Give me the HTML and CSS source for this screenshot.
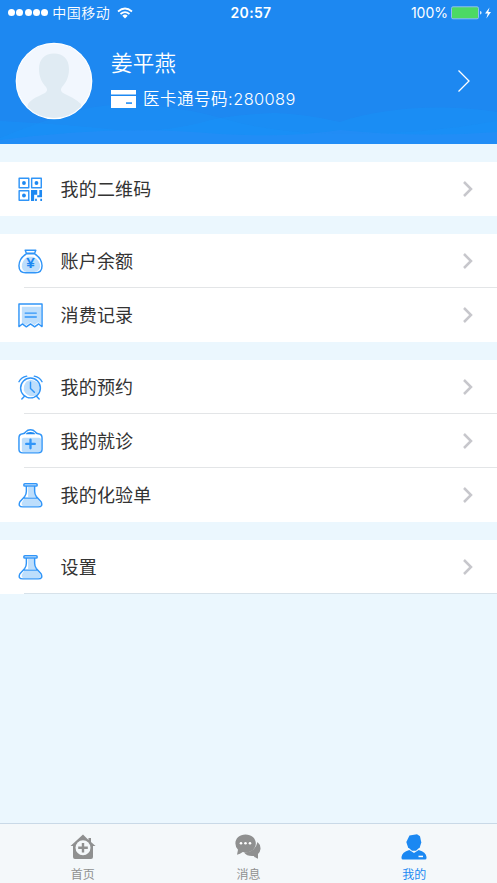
FILE: index.html
```html
<!DOCTYPE html>
<html lang="zh-CN">
<head>
<meta charset="utf-8">
<title>我的</title>
<link rel="stylesheet" href="styles.css">
</head>
<body>
<svg class="defs" aria-hidden="true">
  <symbol id="chevron" viewBox="0 0 12 18"><path d="M2 2l7 7-7 7" fill="none" stroke="#c7c7cc" stroke-width="2.5"/></symbol>
  <symbol id="flask" viewBox="0 0 26 26">
    <path class="tint" d="M10.500 4H17v6q0 2.500 2 4.500h-8.500zM6.500 16h13.500l3.500 4.500q1 3.300-2 3.500H7q-4 0-3-3.500z"/>
    <path class="line" d="M8.700 3.200v5.300Q8.700 11.500 7 14L2 19.500Q-.4 24.800 5 24.800h16q5.400 0 3-5.300L19 14q-1.700-2.500-1.700-5.500V3.200M5.500 15.700h15"/>
    <rect class="line paper" x="6" y=".8" width="14" height="2.400" rx="1.200"/>
  </symbol>
</svg>
<div class="app">
  <header class="header">
    <svg class="waves" viewBox="0 0 497 44" preserveAspectRatio="none">
      <path d="M0 21Q60 24 118 30Q160 33 200 23Q225 15 275 13Q305 14 340 22Q380 8 440 7.500Q475 8 497 12V44H0z" fill="#1696fb" opacity=".4"/>
      <path d="M0 38Q35 23 80 10Q110 2 150 5Q190 9 225 19Q275 34 350 34T497 21V44H0z" fill="#1696fb" opacity=".25"/>
      <path d="M0 40Q120 24 220 34Q290 38 340 30Q420 38 497 32V44H0z" fill="#288df6" opacity=".55"/>
    </svg>
    <div class="status">
      <div class="carrier">
        <span class="dots"><i></i><i></i><i></i><i></i><i></i></span>
        <span class="operator">中国移动</span>
        <svg class="wifi" viewBox="0 0 16 12"><path d="M1 4.500Q8-1.500 15 4.500M3.500 7Q8 3.200 12.500 7" fill="none" stroke="#fff" stroke-width="1.700"/><path d="M5.300 8.700Q8 6.500 10.700 8.700L8 11.500z" fill="#fff"/></svg>
      </div>
      <div class="time">20:57</div>
      <div class="power">
        <span>100%</span>
        <svg class="battery" viewBox="0 0 41 14"><rect x=".5" y=".8" width="27" height="12" rx="1.500" fill="#4cd964" stroke="#8dbcf5"/><path d="M29.200 5q1.300.3 1.300 1.800t-1.300 1.800z" fill="#fff"/><path d="M38.500 1.500L34 7.500h2.800L35.300 12.500 40 6h-2.700z" fill="#fff"/></svg>
      </div>
    </div>
    <div class="profile">
      <svg class="avatar" viewBox="0 0 78 78">
        <defs><clipPath id="face"><circle cx="39" cy="39" r="37"/></clipPath></defs>
        <circle cx="39" cy="39" r="37.700" fill="#f2f7fe" stroke="#fff" stroke-width="1.300"/>
        <path clip-path="url(#face)" d="M39 11.500C30 11.500 24 17 24 27c0 9 3.500 14 7 18 2 3 1 5-2 6.500-6 3-12 5-16 10.500L10 78h60l-4-16c-5-5-11-7.500-17-10.500-3-1.500-4-3.500-2-6.500 3.500-4 7-9 7-18 0-10-6-15.500-15-15.500z" fill="#e0ebf3"/>
      </svg>
      <div class="identity">
        <div class="name">姜平燕</div>
        <div class="card">
          <svg class="card-icon" viewBox="0 0 25 18"><path d="M0 0h25v4.500H0zM0 6h25v12H0z" fill="#fff"/><path d="M15 12.200h6v1.800h-6z" fill="#3a9af5"/></svg>
          <span>医卡通号码:<span class="digits">280089</span></span>
        </div>
      </div>
      <svg class="go" viewBox="0 0 14 24"><path d="M1.500 1.500l10.500 10.500-10.500 10.500" fill="none" stroke="#fff" stroke-width="1.300"/></svg>
    </div>
  </header>

  <main class="menu">
    <section class="group">
      <a class="row">
        <svg class="icon" viewBox="0 0 26 26"><g class="line"><rect x="1.200" y="1.200" width="10" height="10"/><rect x="14.200" y="1.200" width="10" height="10"/><rect x="1.200" y="14.200" width="10" height="10"/></g><g class="solid"><circle cx="6.200" cy="6.200" r="2"/><circle cx="19.200" cy="6.200" r="2"/><circle cx="6.200" cy="19.200" r="2"/><path d="M13.500 13.500H20v5.500h2.200v-5.500h2.800v7.500h-5v-2.500h-3.200V25h-3.300zM17.800 22.700h1.800V25h-1.800zM23.200 22.700H25V25h-1.800z"/></g></svg>
        <span class="label">我的二维码</span><svg class="chevron"><use href="#chevron"/></svg>
      </a>
    </section>
    <section class="group">
      <a class="row">
        <svg class="icon" viewBox="0 0 26 26"><path class="tint" d="M10 8Q4 12 4 18q0 5 5 6h8q6-1 6-6 0-6-7-10z"/><path class="line" d="M8.700 5Q1 10 1 17.500 1 24.800 8 24.800h10q7 0 7-7.300Q25 10 17.300 5M8.700 4.500L7.500 1.300H18.500L17.300 4.500zM8.700 5h8.600"/><text class="yen" x="13" y="20">¥</text></svg>
        <span class="label">账户余额</span><svg class="chevron"><use href="#chevron"/></svg>
      </a>
      <a class="row">
        <svg class="icon" viewBox="0 0 26 26"><path class="tint" d="M4 4h20v18l-3-2-4 3-4-3-4 3-5-2z"/><path class="line" d="M1 1h24v23.500l-3.500-2.700-4.200 3-4.300-3-4.300 3-4.200-3L1 24.500zM7.500 10.500h11.500M7.500 14.500h11.500"/></svg>
        <span class="label">消费记录</span><svg class="chevron"><use href="#chevron"/></svg>
      </a>
    </section>
    <section class="group">
      <a class="row">
        <svg class="icon" viewBox="0 0 26 26"><path class="tint" d="M13 5Q5 7 6 16q3 6 9 6 8-1 8-8-1-8-10-9z"/><circle class="line" cx="13" cy="13.500" r="10.300"/><path class="line" d="M13 7.500v6.500l4 4M1 7Q3.500 2.300 9 1.200M25 7Q22.500 2.300 17 1.200M6.500 22.300L4 25M19.500 22.300L22 25"/></svg>
        <span class="label">我的预约</span><svg class="chevron"><use href="#chevron"/></svg>
      </a>
      <a class="row">
        <svg class="icon" viewBox="0 0 26 26"><rect class="tint" x="4" y="9" width="20" height="15" rx="2"/><path class="line" d="M5 5q2-.1 3-2Q10 .8 13 .8T18 3q1 1.900 3 2 4 .4 4 4v12q0 3.800-4 3.800H5q-4 0-4-3.800V9q0-3.600 4-4z"/><path class="solid" d="M8 5.500Q9 3 13 3t5 2.500z"/><path class="line cross" d="M13 11v9M8.500 15.500h9"/></svg>
        <span class="label">我的就诊</span><svg class="chevron"><use href="#chevron"/></svg>
      </a>
      <a class="row">
        <svg class="icon"><use href="#flask"/></svg>
        <span class="label">我的化验单</span><svg class="chevron"><use href="#chevron"/></svg>
      </a>
    </section>
    <section class="group last">
      <a class="row">
        <svg class="icon"><use href="#flask"/></svg>
        <span class="label">设置</span><svg class="chevron"><use href="#chevron"/></svg>
      </a>
    </section>
  </main>

  <nav class="tabs">
    <a class="tab">
      <svg class="tab-icon" viewBox="0 0 26 26"><path d="M13 .5L.5 12h2.500v11q0 2 2 2h16q2 0 2-2V12h2.500L21 8V4h-2.500v2z" fill="#8f9090"/><circle cx="13" cy="13.800" r="7.500" fill="#f4f8fa"/><path d="M13 9v9.600M8.200 13.800h9.600" stroke="#8f9090" stroke-width="2.400"/></svg>
      <span>首页</span>
    </a>
    <a class="tab">
      <svg class="tab-icon" viewBox="0 0 26 26"><path d="M22.500 8q3.300 2.700 3 7-.3 3-2.500 5v4.800q-2.500-.5-4.300-2.800-6.700.6-9.700-3.500 11 0 13.500-10.500z" fill="#8f9090"/><path d="M10.500.5c6 0 10.300 3.800 10.300 9s-4.300 8.900-10.300 8.900l-2.700-.3Q5 20.500 2 20.700l1-4.900Q.4 13 .4 9.500c0-5.200 4.200-9 10.100-9z" fill="#8f9090"/><g fill="#fff"><circle cx="6" cy="9.200" r="1.300"/><circle cx="10.500" cy="9.200" r="1.300"/><circle cx="15" cy="9.200" r="1.300"/></g></svg>
      <span>消息</span>
    </a>
    <a class="tab active">
      <svg class="tab-icon" viewBox="0 0 26 26"><path d="M8.500 1.500L16 .3l3 2 1.300 6.200-1.500 4.700-3.800 3.600h-4L7 13.200 5.300 8z" fill="#1b88f2"/><path d="M8.300 16l4.700 3 4.700-3q7.300 2.200 7.800 7v1q0 1.500-1.500 1.500H2Q.5 25.500.5 24v-1q.5-4.800 7.800-7z" fill="#1b88f2"/><path d="M17.500 21.700h4.500v1.500h-4.500z" fill="#fff"/></svg>
      <span>我的</span>
    </a>
  </nav>
</div>
</body>
</html>
```
FILE: styles.css
```css
* { box-sizing: border-box; }
body { margin: 0; font-family: Inter, "Noto Sans CJK SC", sans-serif; color: #333; }
.defs { display: none; }
.app { display: flex; flex-direction: column; height: 883px; background: #ebf7fe; overflow: hidden; }
.header { position: relative; flex: none; height: 144px; background: #1d88f1; color: #fff; }
.waves { position: absolute; left: 0; bottom: 0; width: 100%; height: 44px; }
.status { display: grid; grid-template-columns: 1fr auto 1fr; align-items: center; height: 25px; padding: 0 5px 0 8px; font-size: 14px; }
.carrier { display: flex; align-items: center; font-weight: 350; letter-spacing: .5px; }
.operator { padding-bottom: 2px; }
.dots { display: flex; gap: 1.300px; margin-right: 4px; }
.dots i { width: 7px; height: 7px; border-radius: 50%; background: #fff; }
.wifi { width: 16px; height: 12px; margin-left: 7px; }
.time { padding-left: 2px; font-weight: 600; letter-spacing: .3px; }
.power { display: flex; align-items: center; justify-content: flex-end; gap: 3px; }
.battery { width: 41px; height: 14px; }
.profile { position: relative; display: flex; align-items: center; height: 111px; padding: 0 26px 0 15px; }
.avatar { flex: none; width: 78px; height: 78px; }
.identity { flex: 1; margin-left: 18px; padding-bottom: 4px; font-weight: 350; }
.name { font-size: 21.500px; line-height: 32px; letter-spacing: .3px; }
.card { display: flex; align-items: center; gap: 7px; margin-top: 8px; font-size: 16.500px; line-height: 24px; letter-spacing: .5px; }
.digits { font-size: 16.400px; letter-spacing: .4px; }
.card-icon { width: 25px; height: 18px; }
.go { width: 14px; height: 24px; }
.menu { flex: 1; display: flex; flex-direction: column; gap: 18px; padding-top: 18px; }
.group { background: #fff; }
.row { display: flex; align-items: center; height: 54px; padding: 0 23px 0 18px; background: linear-gradient(#e3e5e7, #e3e5e7) 24px 100% / 100% 1px no-repeat; }
.row:last-child { background: none; }
.last .row { background: linear-gradient(#d7e2ea, #d7e2ea) 24px 100% / 100% 1px no-repeat; }
.icon { flex: none; width: 25px; height: 25px; }
.line { fill: none; stroke: #3095f8; stroke-width: 1.500; stroke-linejoin: round; stroke-linecap: round; }
.paper { fill: #fff; }
.cross { stroke-width: 2.400; }
.solid { fill: #1d88f1; }
.tint { fill: #bddefc; }
.yen { fill: #1d88f1; font: bold 16px "Liberation Sans", sans-serif; text-anchor: middle; }
.label { flex: 1; margin-left: 17.500px; padding-top: 2px; font-size: 18px; letter-spacing: .2px; line-height: 26px; }
.chevron { width: 12px; height: 18px; }
.tabs { flex: none; display: grid; grid-template-columns: repeat(3, 1fr); height: 60px; background: #f4f8fa; border-top: 1px solid #c9d9e7; }
.tab { display: flex; flex-direction: column; align-items: center; padding-top: 10px; color: #8f9090; font-size: 12px; line-height: 18px; }
.tab-icon { width: 26px; height: 26px; margin-bottom: 6px; }
.active { color: #1b88f2; }
```
